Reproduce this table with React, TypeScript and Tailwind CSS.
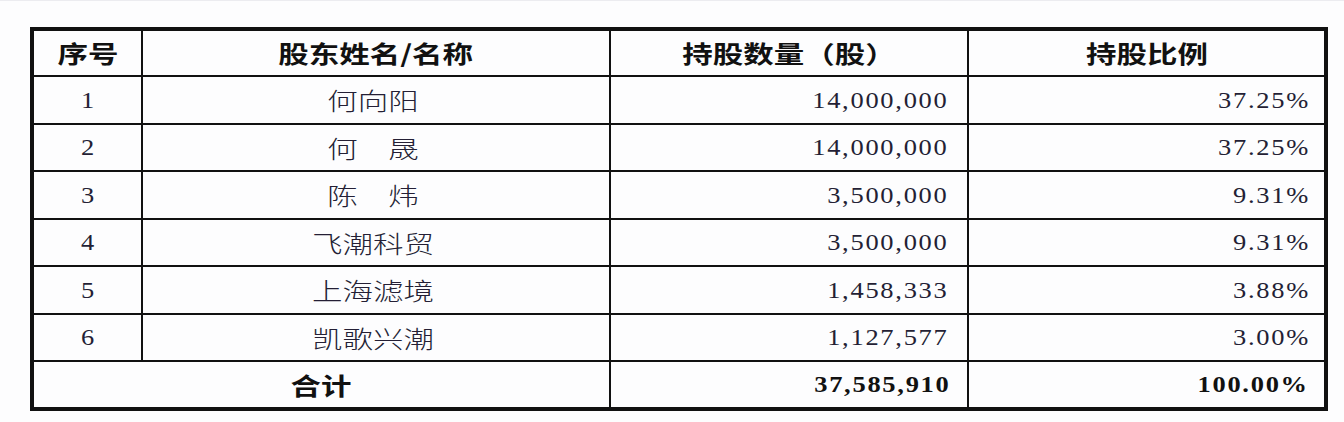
const rows = [
  { no: '1', name: '何向阳', qty: '14,000,000', pct: '37.25%', h: 'h-[48px]' },
  { no: '2', name: '何　晟', qty: '14,000,000', pct: '37.25%', h: 'h-[47px]' },
  { no: '3', name: '陈　炜', qty: '3,500,000', pct: '9.31%', h: 'h-[48px]' },
  { no: '4', name: '飞潮科贸', qty: '3,500,000', pct: '9.31%', h: 'h-[47px]' },
  { no: '5', name: '上海滤境', qty: '1,458,333', pct: '3.88%', h: 'h-[48px]' },
  { no: '6', name: '凯歌兴潮', qty: '1,127,577', pct: '3.00%', h: 'h-[47px]' },
];

const line = 'border-[#111111]';

function Cjk({ children, bold }: { children: React.ReactNode; bold?: boolean }) {
  return (
    <span
      className={`inline-block [transform:scaleX(1.27)] font-['Noto_Sans_CJK_SC',sans-serif] text-[24px] leading-none ${
        bold ? 'font-bold text-[#111111]' : 'font-light text-[#241f35]'
      }`}
    >
      {children}
    </span>
  );
}

function Num({ children, bold, right }: { children: React.ReactNode; bold?: boolean; right?: boolean }) {
  return (
    <span
      className={`inline-block [transform:scaleX(1.15)] tracking-[1.5px] font-['Liberation_Serif',serif] text-[23px] leading-none ${
        right ? 'origin-right' : 'origin-center'
      } ${bold ? 'font-bold text-[#111111]' : 'font-normal text-[#241f35]'}`}
    >
      {children}
    </span>
  );
}

export default function App() {
  return (
    <div className="w-[1344px] h-[422px] bg-[#fdfdfe] border-t border-[#ececf0] pt-[26px] pl-[30px]">
      <div className={`w-[1298px] border-4 ${line} bg-[#fdfdfe]`}>
        <div className="grid grid-cols-[109px_468px_358px_355px]">
          {/* Header */}
          <div className={`h-[46px] border-r-2 border-b-2 ${line} flex items-center justify-center`}>
            <Cjk bold>序号</Cjk>
          </div>
          <div className={`h-[46px] border-r-2 border-b-2 ${line} flex items-center justify-center`}>
            <Cjk bold>股东姓名/名称</Cjk>
          </div>
          <div className={`h-[46px] border-r-2 border-b-2 ${line} flex items-center justify-center`}>
            <Cjk bold>持股数量（股）</Cjk>
          </div>
          <div className={`h-[46px] border-b-2 ${line} flex items-center justify-center`}>
            <Cjk bold>持股比例</Cjk>
          </div>

          {rows.map((r) => (
            <div key={r.no} className="contents">
              <div className={`${r.h} border-r-2 border-b-2 ${line} flex items-center justify-center pl-[2px]`}>
                <Num>{r.no}</Num>
              </div>
              <div className={`${r.h} border-r-2 border-b-2 ${line} flex items-center justify-center pr-[6px]`}>
                <Cjk>{r.name}</Cjk>
              </div>
              <div className={`${r.h} border-r-2 border-b-2 ${line} flex items-center justify-end pr-[19px]`}>
                <Num right>{r.qty}</Num>
              </div>
              <div className={`${r.h} border-b-2 ${line} flex items-center justify-end pr-[14px]`}>
                <Num right>{r.pct}</Num>
              </div>
            </div>
          ))}

          {/* Total */}
          <div className={`col-span-2 h-[45px] border-r-2 ${line} flex items-center justify-center pr-[2px]`}>
            <Cjk bold>合计</Cjk>
          </div>
          <div className={`h-[45px] border-r-2 ${line} flex items-center justify-end pr-[17px]`}>
            <Num bold right>37,585,910</Num>
          </div>
          <div className="h-[45px] flex items-center justify-end pr-[15px]">
            <Num bold right>100.00%</Num>
          </div>
        </div>
      </div>
    </div>
  );
}
